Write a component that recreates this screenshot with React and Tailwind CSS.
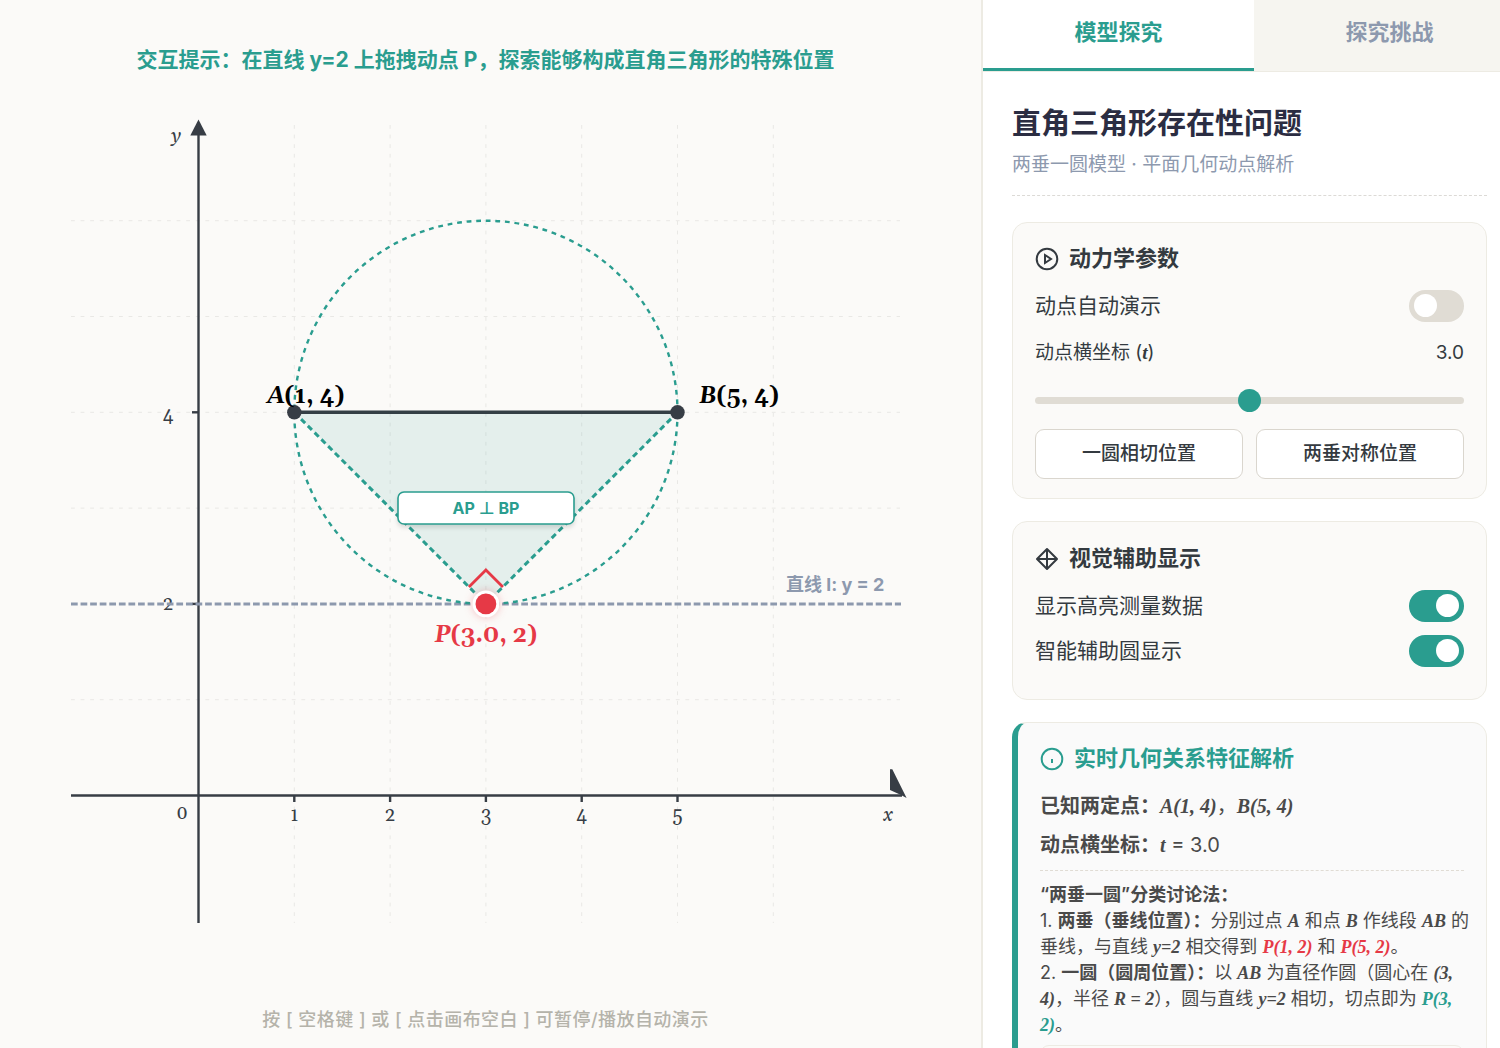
import { useState } from 'react';

const UNIT = 95.8;
const toX = (v) => 198.5 + v * UNIT;
const toY = (v) => 695.5 - v * UNIT;

const MATH = "font-['Liberation_Serif',serif] leading-none font-bold italic";

function PlayIcon() {
  return (
    <svg className="size-6" viewBox="0 0 24 24" fill="none" stroke="currentColor" strokeWidth="2">
      <circle cx="12" cy="12" r="10.3" />
      <path d="M10 8v8l6-4z" />
    </svg>
  );
}

function DiamondIcon() {
  return (
    <svg className="size-6" viewBox="0 0 24 24" fill="none" stroke="currentColor" strokeWidth="2" strokeLinejoin="round">
      <path d="M12 2 22 12 12 22 2 12zM12 2v20M2 12h20" />
    </svg>
  );
}

function InfoIcon() {
  return (
    <svg className="size-6" viewBox="0 0 24 24" fill="none" stroke="currentColor" strokeWidth="2">
      <circle cx="12" cy="12" r="10.3" />
      <path d="M12 12v4" />
    </svg>
  );
}

function Switch({ label, checked, onChange }) {
  return (
    <label className="flex h-8 items-center justify-between text-[21px]">
      <span>{label}</span>
      <input
        type="checkbox"
        role="switch"
        checked={checked}
        onChange={(e) => onChange(e.target.checked)}
        className="h-8 w-[55px] appearance-none rounded-full bg-[#e0dcd4] px-[5px] py-1 before:block before:size-[23px] before:rounded-full before:bg-white checked:bg-[#2a9d8f] checked:before:ml-auto"
      />
    </label>
  );
}

function Graph({ t, showData, showCircle }) {
  const a = { x: toX(1), y: toY(4) };
  const b = { x: toX(5), y: toY(4) };
  const p = { x: toX(t), y: toY(2) };
  return (
    <svg className="w-full" viewBox="0 0 971 860" fontFamily="Georgia, Gelasio, 'Liberation Serif', serif">
      {/* grid */}
      <g stroke="#e9e8e5" strokeWidth="1" strokeDasharray="3.8 5.8">
        {[1, 2, 3, 4, 5, 6].map((v) => (
          <g key={v}>
            <line x1={toX(v)} y1="25" x2={toX(v)} y2="823" />
            <line x1="71" y1={toY(v)} x2="900" y2={toY(v)} />
          </g>
        ))}
      </g>

      {/* axes */}
      <g stroke="#373d45" strokeWidth="2.4">
        <line x1="71" y1="695.5" x2="902" y2="695.5" />
        <line x1="198.5" y1="30" x2="198.5" y2="823" />
        {[1, 2, 3, 4, 5].map((v) => (
          <line key={v} x1={toX(v)} y1="696" x2={toX(v)} y2="702" />
        ))}
        {[2, 4].map((v) => (
          <line key={v} x1="192" y1={toY(v)} x2="198" y2={toY(v)} />
        ))}
      </g>
      <g fill="#373d45">
        <polygon points="198.5,19.5 206.7,35.5 190.3,35.5" />
        <polygon points="890,669.3 892.3,669.3 906.6,698 901,695 890,690" />
      </g>
      <g fill="#373d45" fontSize="19" textAnchor="middle">
        {[1, 2, 3, 4, 5].map((v) => (
          <text key={v} x={toX(v)} y="721">{v}</text>
        ))}
        <text x="168" y="321">4</text>
        <text x="168" y="510">2</text>
        <text x="182" y="719">0</text>
        <text x="888" y="721" fontStyle="italic">x</text>
        <text x="176" y="42" fontStyle="italic">y</text>
      </g>

      <line x1="71" y1={p.y} x2="901" y2={p.y} stroke="#8d99ae" strokeWidth="3" strokeDasharray="6.7 2.88" />
      <text
        x="786"
        y="491"
        fill="#8d99ae"
        fontSize="18"
        fontWeight="700"
        fontFamily="Inter, 'Noto Sans CJK SC', sans-serif"
      >
        直线 l: y = 2
      </text>

      {showCircle && (
        <circle cx={toX(3)} cy={a.y} r={UNIT * 2} fill="none" stroke="#2a9d8f" strokeWidth="2.4" strokeDasharray="4.8 4.8" />
      )}
      <polygon points={`${a.x},${a.y} ${b.x},${b.y} ${p.x},${p.y}`} fill="#2a9d8f" fillOpacity="0.11" />
      <path
        d={`M${a.x} ${a.y} L${p.x} ${p.y} L${b.x} ${b.y}`}
        fill="none"
        stroke="#2a9d8f"
        strokeWidth="3"
        strokeDasharray="5.75 3.83"
      />
      <line x1={a.x} y1={a.y} x2={b.x} y2={b.y} stroke="#343f45" strokeWidth="3.4" />
      <circle cx={a.x} cy={a.y} r="7.2" fill="#373d45" />
      <circle cx={b.x} cy={b.y} r="7.2" fill="#373d45" />
      <g fill="#000" fontSize="23" fontWeight="700">
        <text x="267" y="303">
          <tspan fontStyle="italic">A</tspan>(1, 4)
        </text>
        <text x="699" y="303">
          <tspan fontStyle="italic">B</tspan>(5, 4)
        </text>
      </g>

      {/* right angle mark */}
      <path d={`M${p.x - 17} ${p.y - 17} l17 -17 l17 17`} fill="none" stroke="#e63946" strokeWidth="2.8" />
      <g className="drop-shadow-[0_0_4px_rgba(230,57,70,0.3)]">
        <circle cx={p.x} cy={p.y} r="13.4" fill="#fff" />
      </g>
      <circle cx={p.x} cy={p.y} r="10.4" fill="#e63946" />
      <text x={p.x} y="542" fill="#e63946" fontSize="23" fontWeight="700" textAnchor="middle">
        <tspan fontStyle="italic">P</tspan>({t.toFixed(1)}, 2)
      </text>

      {showData && (
        <g>
          <rect
            x="398"
            y="392"
            width="176"
            height="32"
            rx="6"
            fill="#fff"
            stroke="#2a9d8f"
            strokeWidth="1.6"
            className="drop-shadow-[0_3px_2px_rgba(0,0,0,0.12)]"
          />
          <text
            x="486"
            y="414"
            fill="#2a9d8f"
            fontSize="16"
            fontWeight="700"
            textAnchor="middle"
            fontFamily="Inter, 'Noto Sans CJK SC', sans-serif"
          >
            AP ⊥ BP
          </text>
        </g>
      )}
    </svg>
  );
}

export default function App() {
  const [auto, setAuto] = useState(false);
  const [showData, setShowData] = useState(true);
  const [showCircle, setShowCircle] = useState(true);
  const [t, setT] = useState(3);

  return (
    <div className="flex h-screen overflow-hidden bg-[#fbfaf8] font-['Inter','Noto_Sans_CJK_SC',sans-serif] text-[#343a40]">
      <main className="flex min-w-0 flex-1 flex-col justify-between pr-[10px]">
        <p className="mt-11 mb-6 text-center text-[21px]/8 font-bold text-[#2a9d8f]">
          交互提示：在直线 y=2 上拖拽动点 P，探索能够构成直角三角形的特殊位置
        </p>
        <Graph t={t} showData={showData} showCircle={showCircle} />
        <p className="mt-auto mb-[14px] text-center text-[18px]/7 font-medium tracking-wide text-[#b5b3aa]">
          按 [ 空格键 ] 或 [ 点击画布空白 ] 可暂停/播放自动演示
        </p>
      </main>

      <aside className="w-[519px] shrink-0 overflow-hidden border-l-2 border-[#edebe3] bg-white">
        <nav className="flex h-[72px] border-b border-[#edebe3] text-[22px] font-semibold">
          <button className="-mb-px h-[71px] w-[271px] shrink-0 border-b-3 border-[#2a9d8f] bg-white pb-1 text-[#2a9d8f]">
            模型探究
          </button>
          <button className="h-[71px] w-[271px] shrink-0 bg-[#f6f5f0] pb-[7px] text-[#8d99ae]">探究挑战</button>
        </nav>

        <div className="flex flex-col gap-[22px] pt-8 pr-[13px] pl-[29px]">
          <header className="mb-1 border-b border-dashed border-[#dcdad6] pb-[14px]">
            <h1 className="text-[29px]/10 font-bold text-[#2b2d42]">直角三角形存在性问题</h1>
            <p className="mt-[5px] text-[19px]/8 text-[#8d99ae]">两垂一圆模型 · 平面几何动点解析</p>
          </header>

          <section className="rounded-[15px] border border-[#edebe3] bg-[#fbfaf8] px-[22px] pt-[22px] pb-[19px]">
            <h2 className="mb-[18px] flex h-[27px] items-center gap-[10px] text-[22px] font-semibold">
              <PlayIcon />
              动力学参数
            </h2>
            <Switch label="动点自动演示" checked={auto} onChange={setAuto} />
            <div className="mt-[17px] flex h-7 items-center justify-between text-[19px]">
              <label htmlFor="t">
                动点横坐标 (<span className={MATH}>t</span>)
              </label>
              <output htmlFor="t">{t.toFixed(1)}</output>
            </div>
            <input
              id="t"
              type="range"
              min="0"
              max="6"
              step="0.1"
              value={t}
              onChange={(e) => setT(Number(e.target.value))}
              className="mt-[22px] block h-[23px] w-full appearance-none bg-transparent [&::-webkit-slider-runnable-track]:h-[7px] [&::-webkit-slider-runnable-track]:rounded-full [&::-webkit-slider-runnable-track]:bg-[#e0dcd4] [&::-webkit-slider-thumb]:-mt-2 [&::-webkit-slider-thumb]:size-[23px] [&::-webkit-slider-thumb]:appearance-none [&::-webkit-slider-thumb]:rounded-full [&::-webkit-slider-thumb]:bg-[#2a9d8f]"
            />
            <div className="mt-[17px] grid grid-cols-2 gap-[13px] text-[19px] font-medium">
              <button className="h-[50px] rounded-[9px] border border-[#dad6ce] bg-white" onClick={() => setT(3)}>
                一圆相切位置
              </button>
              <button className="h-[50px] rounded-[9px] border border-[#dad6ce] bg-white" onClick={() => setT(1)}>
                两垂对称位置
              </button>
            </div>
          </section>

          <section className="rounded-[15px] border border-[#edebe3] bg-[#fbfaf8] px-[22px] pt-[23px] pb-8">
            <h2 className="mb-[18px] flex h-[27px] items-center gap-[10px] text-[22px] font-semibold">
              <DiamondIcon />
              视觉辅助显示
            </h2>
            <div className="flex flex-col gap-[13px]">
              <Switch label="显示高亮测量数据" checked={showData} onChange={setShowData} />
              <Switch label="智能辅助圆显示" checked={showCircle} onChange={setShowCircle} />
            </div>
          </section>

          <section className="rounded-[15px] border border-l-6 border-[#edebe3] border-l-[#2a9d8f] bg-[#fafafa] p-[22px] text-[#4a4a4a]">
            <h2 className="mb-[15px] flex h-[27px] items-center gap-[10px] text-[22px] font-semibold text-[#2a9d8f]">
              <InfoIcon />
              实时几何关系特征解析
            </h2>
            <div className="border-b border-dashed border-[#e0dcd4] pb-[5px] text-[20px]/[39px]">
              <p>
                <strong className="font-semibold">已知两定点：</strong>
                <span className={MATH}>A(1, 4)</span>，<span className={MATH}>B(5, 4)</span>
              </p>
              <p>
                <strong className="font-semibold">动点横坐标：</strong>
                <span className={MATH}>t</span> = {t.toFixed(1)}
              </p>
            </div>
            <div className="-mr-2 pt-[11px] text-[18px]/[26px]">
              <strong className="font-semibold">“两垂一圆”分类讨论法：</strong>
              <p>
                1. <strong className="font-semibold">两垂（垂线位置）：</strong>分别过点 <span className={MATH}>A</span> 和点{' '}
                <span className={MATH}>B</span> 作线段 <span className={MATH}>AB</span> 的垂线，与直线{' '}
                <span className={MATH}>y=2</span> 相交得到 <span className={`${MATH} text-[#e63946]`}>P(1, 2)</span> 和{' '}
                <span className={`${MATH} text-[#e63946]`}>P(5, 2)</span>。
              </p>
              <p>
                2. <strong className="font-semibold">一圆（圆周位置）：</strong>以 <span className={MATH}>AB</span>{' '}
                为直径作圆（圆心在 <span className={MATH}>(3, 4)</span>，半径 <span className={MATH}>R = 2</span>
                ），圆与直线 <span className={MATH}>y=2</span> 相切，切点即为{' '}
                <span className={`${MATH} text-[#2a9d8f]`}>P(3, 2)</span>。
              </p>
            </div>
            <div className="mt-[7px] h-20 rounded-[9px] border border-[#edebe3] bg-[#fbfaf8]" />
          </section>
        </div>
      </aside>
    </div>
  );
}
